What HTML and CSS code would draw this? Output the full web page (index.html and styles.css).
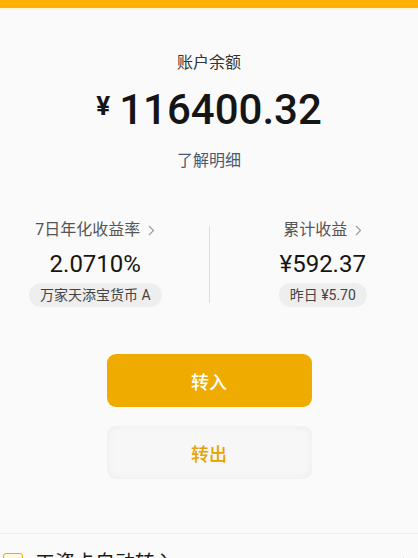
FILE: index.html
```html
<!DOCTYPE html>
<html lang="zh-CN">
<head>
  <meta charset="UTF-8" />
  <meta name="viewport" content="width=device-width, initial-scale=1.0"/>
  <title>账户余额</title>
  <link rel="stylesheet" href="styles.css">
</head>
<body>
  <div class="topbar"></div>

  <div class="balance">
    <div class="balance-label">账户余额</div>
    <div class="balance-amount"><span class="yen">¥</span>116400.32</div>
    <a class="detail-link">了解明细</a>
  </div>

  <div class="stats">
    <div class="stat">
      <div class="stat-label">7日年化收益率
        <svg class="chev" width="7" height="11" viewBox="0 0 7 11"><path d="M1 1l4.5 4.5L1 10" fill="none" stroke="#999" stroke-width="1.1"/></svg>
      </div>
      <div class="stat-value">2.0710%</div>
      <div class="pill">万家天添宝货币 A</div>
    </div>
    <div class="stat-divider"></div>
    <div class="stat">
      <div class="stat-label">累计收益
        <svg class="chev" width="7" height="11" viewBox="0 0 7 11"><path d="M1 1l4.5 4.5L1 10" fill="none" stroke="#999" stroke-width="1.1"/></svg>
      </div>
      <div class="stat-value">¥592.37</div>
      <div class="pill">昨日 ¥5.70</div>
    </div>
  </div>

  <div class="actions">
    <button class="btn btn-in">转入</button>
    <button class="btn btn-out">转出</button>
  </div>

  <div class="list-row">
    <span class="row-icon"></span>
    <span class="row-text">工资卡自动转入</span>
    <svg class="row-chev" width="8" height="13" viewBox="0 0 8 13"><path d="M1 1l5.5 5.5L1 12" fill="none" stroke="#999" stroke-width="1.3"/></svg>
  </div>
</body>
</html>
```

FILE: styles.css
```css
body {
  margin: 0;
  background: #fafafa;
  font-family: Roboto, "Noto Sans CJK SC", sans-serif;
  color: #1a1a1a;
  overflow: hidden;
}
.topbar {
  height: 8px;
  background: #ffb000;
  border-bottom: 2px solid #fff3cf;
}
.balance {
  display: flex;
  flex-direction: column;
  align-items: center;
  padding-top: 41px;
}
.balance-label {
  font-size: 16px;
  line-height: 24px;
  color: #333;
}
.balance-amount {
  margin-top: 6px;
  font-size: 42px;
  line-height: 50px;
  font-weight: 500;
  color: #151515;
}
.yen {
  font-size: 26px;
  font-weight: 700;
  vertical-align: 9px;
  margin-right: 9px;
}
.detail-link {
  margin-top: 14px;
  font-size: 16px;
  line-height: 24px;
  color: #4a5870;
}
.stats {
  display: grid;
  grid-template-columns: 1fr 1px 1fr;
  column-gap: 18px;
  margin-top: 45px;
}
.stat {
  display: flex;
  flex-direction: column;
  align-items: center;
}
.stat-label {
  display: flex;
  align-items: center;
  gap: 8px;
  font-size: 16px;
  line-height: 24px;
  color: #555;
}
.chev {
  margin-top: 1px;
}
.stat-value {
  margin-top: 7px;
  font-size: 24px;
  line-height: 30px;
  color: #151515;
}
.pill {
  margin-top: 4px;
  height: 24px;
  line-height: 24px;
  padding: 0 11px;
  border-radius: 12px;
  background: #eeeeee;
  font-size: 14px;
  color: #444;
}
.stat-divider {
  background: #dedede;
  margin: 8px 0 4px;
}
.actions {
  display: flex;
  flex-direction: column;
  align-items: center;
  gap: 19px;
  margin-top: 47px;
}
.btn {
  width: 205px;
  height: 53px;
  border: none;
  border-radius: 9px;
  font-family: "Noto Sans CJK SC", sans-serif;
  font-size: 18px;
  font-weight: 500;
}
.btn-in {
  background: #efab00;
  color: #fff;
}
.btn-out {
  background: #f7f7f7;
  color: #e8a200;
  box-shadow: inset 0 0 10px rgba(0, 0, 0, 0.05);
}
.list-row {
  display: flex;
  align-items: center;
  margin-top: 54px;
  border-top: 1px solid #f0f0f0;
  padding: 15px 8px 18px 3px;
}
.row-icon {
  width: 18px;
  height: 18px;
  border: 1.5px solid #e7b000;
  border-radius: 3px;
  background: #fff8dc;
}
.row-text {
  flex: 1;
  margin-left: 12px;
  font-size: 20px;
  line-height: 28px;
  color: #1a1a1a;
}
```
